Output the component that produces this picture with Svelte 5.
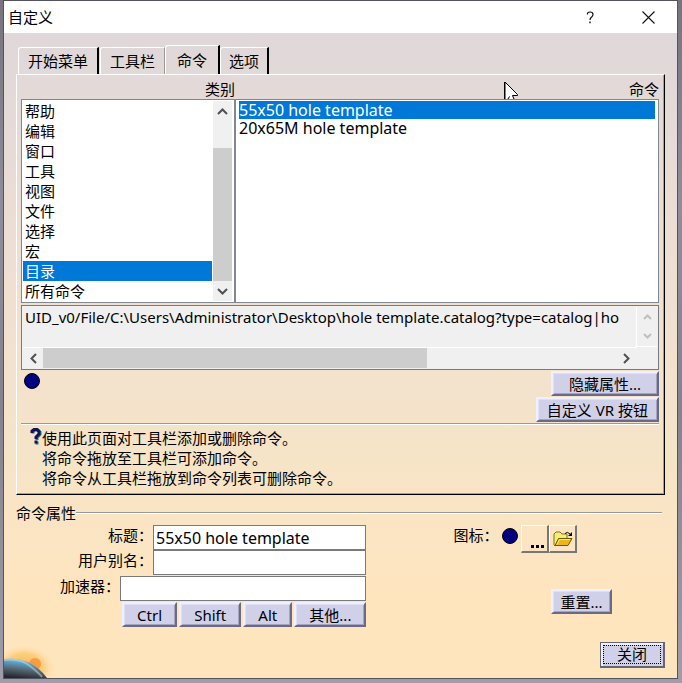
<script>
  const tabs = ["开始菜单", "工具栏", "命令", "选项"];
  const categories = [
    "帮助",
    "编辑",
    "窗口",
    "工具",
    "视图",
    "文件",
    "选择",
    "宏",
    "目录",
    "所有命令",
  ];
  const commands = ["55x50 hole template", "20x65M hole template"];
  const modifiers = ["Ctrl", "Shift", "Alt", "其他..."];

  let activeTab = "命令";
  let category = "目录";
  let command = commands[0];
  let title = commands[0];
  let alias = "";
  let accelerator = "";
  let path =
    "UID_v0/File/C:\\Users\\Administrator\\Desktop\\hole template.catalog?type=catalog|ho";

  function selectCommand(name) {
    command = name;
    title = name;
  }

  function addModifier(name) {
    if (name !== "其他...") {
      accelerator += `${name}+`;
    }
  }
</script>

<div class="desktop">
  <div class="dialog" role="dialog" aria-labelledby="dialog-title">
    <header>
      <h1 id="dialog-title">自定义</h1>
      <button class="caption" aria-label="帮助">
        <svg width="9" height="13" viewBox="0 0 9 13">
          <path d="M1.5 3.6V2.2Q2.5 1 4.2 1Q7 1 7 3.5Q7 4.8 5.6 6Q4 7.3 4 9" fill="none" stroke="#111" stroke-width="1.2" />
          <path d="M3.3 10.6h1.4v1.6h-1.4z" fill="#111" />
        </svg>
      </button>
      <button class="caption" aria-label="关闭窗口">
        <svg width="13" height="13" viewBox="0 0 13 13">
          <path d="M.5.5l12 12M12.5.5l-12 12" stroke="#111" stroke-width="1.1" />
        </svg>
      </button>
    </header>

    <div class="client">
      <div class="tabs" role="tablist">
        {#each tabs as tab}
          <button
            role="tab"
            class="tab"
            class:active={tab === activeTab}
            aria-selected={tab === activeTab}
            on:click={() => (activeTab = tab)}>{tab}</button>
        {/each}
      </div>

      <div class="panel">
        <div class="lists headings">
          <span id="category-label">类别</span>
          <span id="command-label">命令</span>
          <svg class="pointer" width="15" height="17" viewBox="0 0 15 17">
            <path d="M1 0V17H3L5 15L6 17H9L8 13H14Z" fill="#fff" />
            <path d="M1 0L13.5 12.5V13.5H8.5L10 17M4 17L5.6 14.4" fill="none" stroke="#000" stroke-width="1" />
            <path d="M0 0h1.5v17H0z" />
          </svg>
        </div>
        <div class="lists">
          <div class="list">
            <ul aria-labelledby="category-label">
              {#each categories as name}
                <li>
                  <button
                    class="item"
                    class:selected={name === category}
                    on:click={() => (category = name)}>{name}</button>
                </li>
              {/each}
            </ul>
            <div class="vscroll">
              <button class="arrow" aria-label="向上滚动">
                <svg width="11" height="7" viewBox="0 0 11 7"><path d="M1 6L5.5 1.5L10 6" /></svg>
              </button>
              <div class="thumb"></div>
              <button class="arrow" aria-label="向下滚动">
                <svg width="11" height="7" viewBox="0 0 11 7"><path d="M1 1L5.5 5.5L10 1" /></svg>
              </button>
            </div>
          </div>
          <div class="list commands">
            <ul aria-labelledby="command-label">
              {#each commands as name}
                <li>
                  <button
                    class="item"
                    class:selected={name === command}
                    on:click={() => selectCommand(name)}>{name}</button>
                </li>
              {/each}
            </ul>
          </div>
        </div>

        <div class="path">
          <textarea readonly wrap="off" aria-label="命令说明" bind:value={path}></textarea>
          <div class="side">
            <svg width="9" height="6" viewBox="0 0 9 6"><path d="M1 5L4.5 1.5L8 5" /></svg>
            <svg width="9" height="6" viewBox="0 0 9 6"><path d="M1 1L4.5 4.5L8 1" /></svg>
          </div>
          <div class="hscroll">
            <button class="arrow" aria-label="向左滚动">
              <svg width="7" height="11" viewBox="0 0 7 11"><path d="M6 1L1.5 5.5L6 10" /></svg>
            </button>
            <div class="track"><div class="thumb"></div></div>
            <button class="arrow" aria-label="向右滚动">
              <svg width="7" height="11" viewBox="0 0 7 11"><path d="M1 1L5.5 5.5L1 10" /></svg>
            </button>
          </div>
        </div>

        <div class="actions">
          <span class="dot"></span>
          <div class="stack">
            <button class="push">隐藏属性...</button>
            <button class="push">自定义 VR 按钮</button>
          </div>
        </div>

        <hr />

        <div class="help">
          <svg width="12" height="17" viewBox="0 0 12 17">
            <path d="M3 5.5V3.5L5 2H8L10 4V6.5L7 9.5V12M7 13.5V16.5" fill="none" stroke="#0a8080" stroke-width="3" />
            <path d="M2 5V3L4 1.5H7L9 3.5V6L6 9V11M6 12.5V15.5" fill="none" stroke="#14105a" stroke-width="3" />
          </svg>
          <p>
            使用此页面对工具栏添加或删除命令。<br />
            将命令拖放至工具栏可添加命令。<br />
            将命令从工具栏拖放到命令列表可删除命令。
          </p>
        </div>
      </div>

      <div class="legend">
        <h2>命令属性</h2>
        <hr />
      </div>

      <div class="properties">
        <div class="fields">
          <div class="field">
            <label for="title">标题：</label>
            <input id="title" type="text" bind:value={title} />
          </div>
          <div class="field">
            <label for="alias">用户别名：</label>
            <input id="alias" type="text" bind:value={alias} />
          </div>
          <div class="field wide">
            <label for="accelerator">加速器：</label>
            <input id="accelerator" type="text" bind:value={accelerator} />
          </div>
          <div class="modifiers">
            {#each modifiers as name}
              <button class="push" on:click={() => addModifier(name)}>{name}</button>
            {/each}
          </div>
        </div>

        <div class="extras">
          <div class="icon-row">
            <span>图标：</span>
            <span class="dot"></span>
            <button class="tool more" aria-label="更多图标">
              <svg width="13" height="3" viewBox="0 0 13 3"><path d="M0 0h3v3H0zM5 0h3v3H5zM10 0h3v3h-3z" /></svg>
            </button>
            <button class="tool" aria-label="打开文件">
              <svg width="20" height="16" viewBox="0 0 20 16">
                <path d="M1 14V3L3 1H7L9 3H14V8H6L2 15z" fill="#f6ec7c" stroke="#7c7414" />
                <path d="M2 14.5L5.5 7.5H19L15 14.5z" fill="#eeb51c" stroke="#6b5b00" />
                <path d="M4 13.5L6.5 8.5H17" fill="none" stroke="#ffe66b" />
                <path d="M12 2.5Q14.5 0 17 3" fill="none" stroke="#000" />
                <path d="M19 1V5H15z" />
              </svg>
            </button>
          </div>
          <button class="push reset">重置...</button>
        </div>
      </div>

      <footer>
        <button class="push close"><span>关闭</span></button>
      </footer>

      <svg class="globe" width="60" height="50" viewBox="0 0 60 50">
        <defs>
          <radialGradient id="glow">
            <stop offset="0" stop-color="#f9b04a" />
            <stop offset=".6" stop-color="#fbc568" stop-opacity=".75" />
            <stop offset="1" stop-color="#ffe5bd" stop-opacity="0" />
          </radialGradient>
          <linearGradient id="earth" x1=".6" y1="0" x2=".35" y2="1">
            <stop offset="0" stop-color="#9fd0dc" />
            <stop offset=".3" stop-color="#5a9cc0" />
            <stop offset=".6" stop-color="#56646f" />
            <stop offset="1" stop-color="#23272e" />
          </linearGradient>
        </defs>
        <ellipse cx="20" cy="40" rx="32" ry="24" fill="url(#glow)" />
        <circle cx="31" cy="36" r="6" fill="#f58a2e" opacity=".7" />
        <path d="M0 31Q12 29 24 34Q36 40 43 50H0z" fill="url(#earth)" />
        <path d="M0 32Q16 30 26 38T38 49" fill="none" stroke="#c4e2e6" stroke-width="2" opacity=".5" />
      </svg>
    </div>
  </div>
</div>

<style>
  :global(body) {
    margin: 0;
  }
  .desktop {
    display: flex;
    min-height: 100vh;
    box-sizing: border-box;
    padding: 0 4px 4px 3px;
    background: linear-gradient(#77747f, #8f8c9c 30%, #85828f 60%, #9f9dab);
    font-family: "Noto Sans", "Noto Sans CJK SC", sans-serif;
    font-size: 15px;
    line-height: 20px;
    color: #000;
  }
  .dialog {
    flex: 1;
    min-width: 0;
    display: flex;
    flex-direction: column;
    border: 1px solid #55535c;
  }
  button,
  input,
  textarea {
    font: inherit;
    color: inherit;
    margin: 0;
    box-sizing: border-box;
  }
  button {
    padding: 0;
    border: 0;
    background: none;
    white-space: nowrap;
  }
  svg {
    display: block;
  }
  header {
    display: flex;
    height: 32px;
    background: #fff;
  }
  h1,
  h2 {
    margin: 0;
    font-size: 15px;
    font-weight: normal;
  }
  h1 {
    flex: 1;
    padding-left: 4px;
    line-height: 32px;
  }
  .caption {
    width: 58px;
    display: flex;
    align-items: center;
    justify-content: center;
  }
  .client {
    position: relative;
    flex: 1;
    display: flex;
    flex-direction: column;
    padding: 12px 12px 10px;
    background: linear-gradient(#dfd7d9, #eedfd3 35%, #f6e4c8 65%, #ffe5bd 90%);
  }
  .tabs {
    display: flex;
    align-items: flex-end;
    padding-left: 2px;
  }
  .tab {
    height: 27px;
    padding: 0 9px;
    border: 1px solid #fff;
    border-right: 2px solid #000;
    border-bottom: 0;
    border-radius: 3px 0 0 0;
    margin-right: 1px;
  }
  .tab:nth-child(2) {
    border-right: 1px solid #999;
    margin-right: 0;
  }
  .tab:last-child {
    padding: 0 8px;
  }
  .tab.active {
    height: 29px;
    padding: 0 11px;
    margin-right: 0;
  }
  .panel {
    border: 1px solid #fff;
    border-right-color: #000;
    border-bottom-color: #000;
    box-shadow: inset -1px -1px #a39f9c;
    padding: 4px 5px 6px 4px;
  }
  .lists {
    display: grid;
    grid-template-columns: 214fr 424fr;
  }
  .headings {
    position: relative;
    text-align: right;
  }
  .pointer {
    position: absolute;
    right: 22%;
    bottom: 0;
  }
  .list {
    display: flex;
    min-width: 0;
    border: 1px solid #828790;
    padding: 1px;
    background: #fff;
  }
  .list ul {
    flex: 1;
    min-width: 0;
    margin: 0;
    padding: 0;
    list-style: none;
  }
  .item {
    display: block;
    width: 100%;
    height: 20px;
    padding-left: 2px;
    text-align: left;
  }
  .commands {
    padding: 1px 3px;
  }
  .commands .item {
    height: 18px;
    line-height: 18px;
    font-size: 16px;
  }
  .commands .item {
    padding-left: 0;
  }
  .item.selected {
    background: #0078d7;
    color: #fff;
  }
  .vscroll {
    display: flex;
    flex-direction: column;
    align-items: stretch;
    width: 19px;
    margin: 0 1px;
    background: #f0f0f0;
  }
  .arrow {
    flex: none;
    height: 20px;
    display: flex;
    align-items: center;
    justify-content: center;
  }
  .hscroll .arrow {
    width: 20px;
  }
  .arrow path,
  .side path {
    fill: none;
    stroke: #505050;
    stroke-width: 2;
  }
  .thumb {
    background: #cdcdcd;
  }
  .vscroll .thumb {
    flex: 1;
    margin-top: 27px;
  }
  .path {
    display: grid;
    grid-template-columns: 1fr 21px;
    margin-top: 2px;
    padding: 1px;
    border: 1px solid #7a7a7a;
    background: #f0f0f0;
  }
  .path textarea {
    display: block;
    width: 100%;
    height: 40px;
    padding: 0 2px;
    border: 0;
    outline: 0;
    resize: none;
    overflow: hidden;
    background: transparent;
  }
  .side {
    display: flex;
    flex-direction: column;
    align-items: center;
    justify-content: space-around;
    border-left: 1px solid #fff;
    border-bottom: 1px solid #fff;
  }
  .side path {
    stroke: #bfbfbf;
  }
  .hscroll {
    display: flex;
    height: 20px;
    border-top: 1px solid #fff;
  }
  .track {
    flex: 1;
    display: flex;
  }
  .track .thumb {
    width: 67%;
  }
  .actions {
    display: flex;
    justify-content: space-between;
    align-items: flex-start;
    padding: 1px 0 1px 3px;
  }
  .dot {
    width: 14px;
    height: 14px;
    margin-top: 2px;
    border: 1px solid #000;
    border-radius: 50%;
    background: #000080;
  }
  .stack {
    display: flex;
    flex-direction: column;
    align-items: flex-end;
    gap: 1px;
  }
  .push {
    height: 25px;
    padding: 0 16px;
    border: 2px solid;
    border-color: #f0f0fc #6a6a85 #6a6a85 #f0f0fc;
    box-shadow:
      inset 1px 1px #e0e0f4,
      inset -1px -1px #a4a4c0;
    background: #d0d0e8;
    line-height: 20px;
  }
  .stack .push:last-child {
    padding: 0 9px;
  }
  hr {
    margin: 0;
    border: 0;
    border-top: 1px solid #999;
    border-bottom: 1px solid #fff;
  }
  .help {
    display: flex;
    align-items: flex-start;
    padding: 3px 0 0 9px;
  }
  .help p {
    margin: 0;
  }
  .legend {
    display: flex;
    align-items: center;
    margin-top: 8px;
  }
  .legend hr {
    flex: 1;
    margin-right: 3px;
  }
  .properties {
    display: grid;
    grid-template-columns: minmax(0, 351fr) minmax(0, 299fr);
    margin-top: 2px;
  }
  .field {
    display: flex;
    height: 25px;
  }
  .field label {
    flex: none;
    width: 137px;
    text-align: right;
  }
  .field input {
    flex: 1;
    min-width: 0;
    padding: 0 2px;
    border: 1px solid #7a7a7a;
    background: #fff;
    outline: 0;
    font-size: 16px;
  }
  .wide {
    margin-top: 1px;
  }
  .wide label {
    width: 104px;
  }
  .modifiers {
    display: flex;
    gap: 2px;
    padding: 1px 0 0 106px;
  }
  .modifiers .push {
    flex: auto;
    padding: 0 10px;
  }
  .extras {
    display: flex;
    flex-direction: column;
    justify-content: space-between;
    align-items: flex-start;
  }
  .icon-row {
    display: flex;
    padding-left: 87px;
  }
  .icon-row .dot {
    margin: 3px 3px 0 4px;
  }
  .tool {
    width: 28px;
    height: 28px;
    display: flex;
    align-items: center;
    justify-content: center;
    border: 1px solid #fff;
    border-right: 2px solid #777;
    border-bottom: 2px solid #777;
  }
  .more {
    align-items: flex-end;
    padding: 0 0 3px 5px;
  }
  .reset {
    margin: 0 0 13px 185px;
    padding: 0 7px;
  }
  footer {
    display: flex;
    justify-content: flex-end;
    margin-top: auto;
  }
  .close {
    width: 65px;
    height: 26px;
    padding: 2px;
    border-color: #66666e;
    border-width: 1px 2px 2px 1px;
    box-shadow: inset 2px 2px #f0f0fc;
  }
  .close span {
    display: block;
    border: 1px dotted #000;
    line-height: 17px;
  }
  .globe {
    position: absolute;
    left: 0;
    bottom: 0;
    pointer-events: none;
  }
</style>
